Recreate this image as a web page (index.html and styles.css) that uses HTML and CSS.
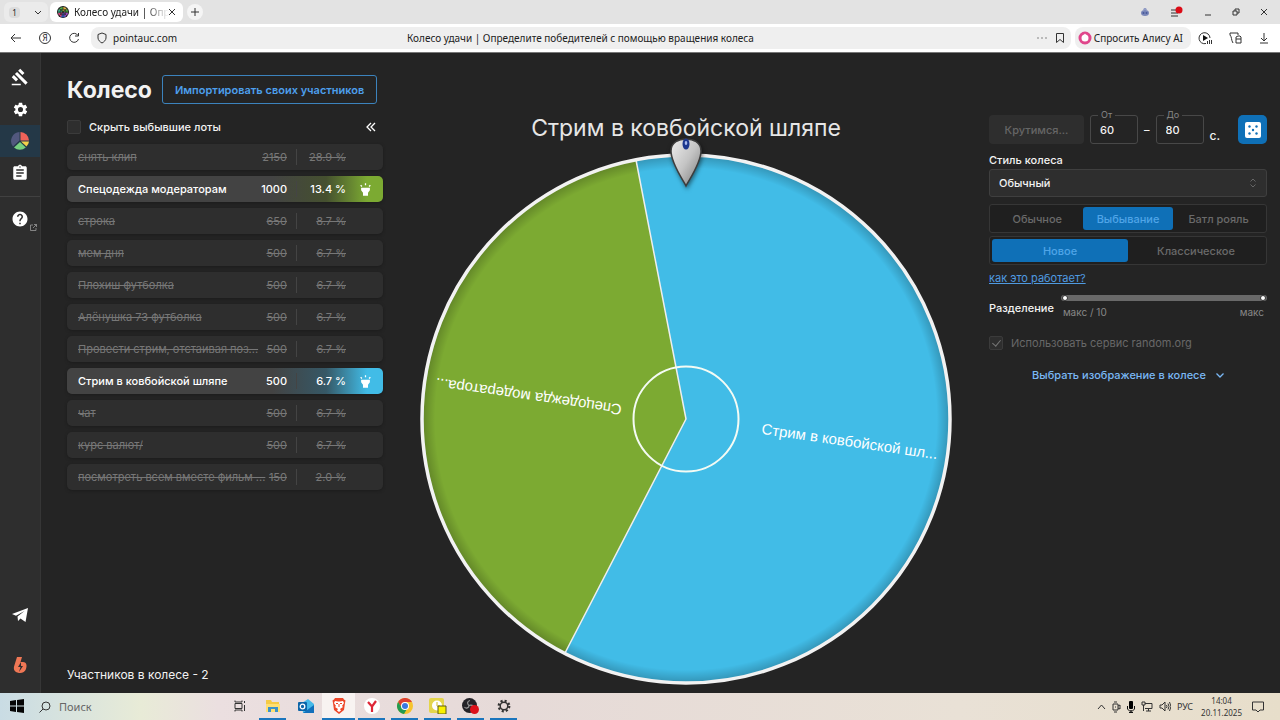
FILE: index.html
```html
<!DOCTYPE html>
<html lang="ru">
<head>
    <meta charset="UTF-8">
    <meta name="viewport" content="width=device-width, initial-scale=1.0">
    <title>Колесо удачи | Определите победителей с помощью вращения колеса</title>
    <link rel="stylesheet" href="styles.css">
</head>
<body>

    <!-- Browser tabs -->
    <div class="tabs">
        <button class="tab-group" aria-label="Группа вкладок"><span class="tab-count">1</span>
            <svg width="8" height="5" viewBox="0 0 8 5" class="line"><path d="M1 1l3 3 3-3"/></svg>
        </button>
        <div class="tab">
            <svg width="12" height="12" viewBox="0 0 12 12">
                <circle cx="6" cy="6" r="6" fill="#252525"/>
                <path d="M6 6V1A5 5 0 0 1 10 3z" fill="#e0b040"/><path d="M6 6l4-3a5 5 0 0 1 1 4z" fill="#4dab3d"/>
                <path d="M6 6l5 1a5 5 0 0 1-3 4z" fill="#9d47c0"/><path d="M6 6l2 5a5 5 0 0 1-4 0z" fill="#3e67dc"/>
                <path d="M6 6l-2 5a5 5 0 0 1-3-4z" fill="#d2417b"/><path d="M6 6L1 7a5 5 0 0 1 1-4z" fill="#3ab08c"/><path d="M6 6L2 3a5 5 0 0 1 4-2z" fill="#4fae48"/>
                <path d="M6 0v12M0 6h12M2 2l8 8M10 2l-8 8" stroke="#222" stroke-width=".6"/><circle cx="6" cy="6" r="3" fill="none" stroke="#222" stroke-width=".6"/>
            </svg>
            <span class="tab-title">Колесо удачи | Опреде</span>
            <button class="plain" aria-label="Закрыть вкладку"><svg width="6" height="6" viewBox="0 0 6 6" class="line"><path d="M0 0l6 6M6 0L0 6"/></svg></button>
        </div>
        <button class="tab-add" aria-label="Новая вкладка"><svg width="8" height="8" viewBox="0 0 8 8" class="line"><path d="M4 0v8M0 4h8"/></svg></button>
        <div class="window-buttons">
            <button class="plain" aria-label="Профиль"><svg width="10" height="10" viewBox="0 0 10 10"><ellipse cx="5" cy="6" rx="4" ry="3" fill="#7986b8"/><path d="M3 3h4l-1-2H4z" fill="#929dc5"/><circle cx="3.500" cy="6" r="1" fill="#485a9b"/><circle cx="6.500" cy="6" r="1" fill="#485a9b"/></svg></button>
            <button class="plain" aria-label="Меню"><svg width="14" height="12" viewBox="0 0 14 12"><path d="M1 4h6M1 7h7M1 10h7" stroke="#333"/><circle cx="9" cy="4" r="3.500" fill="#dc0b16"/></svg></button>
            <button class="plain" aria-label="Свернуть"><svg width="8" height="8" viewBox="0 0 8 8" class="line"><path d="M1 7h6"/></svg></button>
            <button class="plain" aria-label="Развернуть"><svg width="8" height="8" viewBox="0 0 8 8" class="line"><path d="M1 3h4v4H1zM3 3V1h4v4H5"/></svg></button>
            <button class="plain" aria-label="Закрыть"><svg width="8" height="8" viewBox="0 0 8 8" class="line"><path d="M1 1l6 6M7 1L1 7"/></svg></button>
        </div>
    </div>

    <!-- Address bar -->
    <div class="toolbar">
        <button class="plain" aria-label="Назад"><svg width="12" height="12" viewBox="0 0 12 12" class="line"><path d="M11 6H1M5 2L1 6l4 4"/></svg></button>
        <button class="ya" aria-label="Яндекс">Я</button>
        <button class="plain" aria-label="Обновить"><svg width="12" height="12" viewBox="0 0 12 12" class="line"><path d="M10 3.500A4.500 4.500 0 1 0 10.500 7M10.500 1v3H7"/></svg></button>
        <div class="address">
            <div class="host">
                <svg width="10" height="12" viewBox="0 0 10 12" class="line"><path d="M5 1l4 1.500v3.500c0 2-2 4-4 5-2-1-4-3-4-5V2.500z"/></svg>
                <span>pointauc.com</span>
            </div>
            <span class="page-title">Колесо удачи | Определите победителей с помощью вращения колеса</span>
            <div class="address-tools">
                <svg width="12" height="4" viewBox="0 0 12 4" fill="#777"><circle cx="2" cy="2" r=".8"/><circle cx="6" cy="2" r=".8"/><circle cx="10" cy="2" r=".8"/></svg>
                <svg width="8" height="10" viewBox="0 0 8 10" class="line"><path d="M.5.500h7v9L4 6.500l-3.500 3z"/></svg>
            </div>
        </div>
        <button class="alice"><svg width="14" height="14" viewBox="0 0 14 14"><circle cx="7" cy="7" r="5" fill="#fff" stroke="#e0478c" stroke-width="3"/><path d="M7 2.500L10 7H4z" fill="#fff"/></svg>Спросить Алису AI</button>
        <div class="tools">
            <button class="plain" aria-label="Плеер"><svg width="15" height="14" viewBox="0 0 15 14"><path d="M8 12.500A5.500 5.500 0 1 1 12 7" class="line"/><path d="M5 4v6l5-3z" fill="#111"/><path d="M9.500 13v-3M11.500 13V9M13.500 13v-4" stroke="#333"/></svg></button>
            <button class="plain" aria-label="Коллекции"><svg width="14" height="12" viewBox="0 0 14 12" class="line"><path d="M4 11C2 8 3 5 1 3V1h8v2M7 11V5l2-1h2l1 1v6zM7 7h5"/></svg></button>
            <button class="plain" aria-label="Загрузки"><svg width="10" height="12" viewBox="0 0 10 12" class="line"><path d="M5 1v7M2 6l3 3 3-3M1 11h8"/></svg></button>
        </div>
    </div>

    <div class="app">
        <!-- Sidebar -->
        <nav class="sidebar">
            <a href="#" aria-label="Аукцион"><svg width="18" height="18" viewBox="0 0 24 24"><path d="M1 21h12v2H1zM5.245 8.070l2.830-2.827 14.140 14.142-2.828 2.828zM12.317 1l5.657 5.656-2.830 2.830-5.654-5.660zM3.825 9.485l5.657 5.657-2.828 2.828-5.657-5.657z"/></svg></a>
            <a href="#" aria-label="Настройки"><svg width="17" height="17" viewBox="0 0 24 24"><path d="M19.140 12.940c.040-.300.060-.610.060-.940 0-.320-.020-.640-.070-.940l2.030-1.580c.180-.140.230-.410.120-.610l-1.920-3.320c-.120-.220-.370-.290-.590-.220l-2.390.960c-.500-.380-1.030-.700-1.620-.940l-.360-2.540c-.040-.240-.240-.410-.480-.410h-3.840c-.240 0-.430.170-.470.410l-.360 2.540c-.590.240-1.130.570-1.620.940l-2.390-.960c-.220-.080-.470 0-.590.220L2.740 8.870c-.120.210-.080.470.120.610l2.030 1.580c-.050.300-.090.630-.090.940s.020.640.070.940l-2.030 1.580c-.180.140-.230.410-.120.610l1.920 3.320c.120.220.370.290.590.220l2.390-.960c.500.380 1.030.700 1.620.940l.360 2.540c.050.240.240.410.480.410h3.840c.240 0 .440-.170.470-.410l.360-2.540c.590-.240 1.130-.560 1.620-.940l2.390.960c.220.080.470 0 .590-.220l1.920-3.320c.120-.220.070-.470-.120-.610zM12 15.600A3.600 3.600 0 1 1 12 8.400a3.600 3.600 0 0 1 0 7.200z"/></svg></a>
            <a href="#" class="active" aria-label="Колесо"><svg width="18" height="18" viewBox="0 0 18 18"><path d="M8.500 8.500V0A9 9 0 0 0 2 14.500z" fill="#52587e"/><path d="M9.500 8.500V0A9 9 0 0 1 18 8.500z" fill="#ef6259"/><path d="M10 9.500h8a9 9 0 0 1-2.500 5z" fill="#f3cf4b"/><path d="M9 10l5.800 5.500A9 9 0 0 1 3 15.500z" fill="#77d081"/></svg></a>
            <a href="#" aria-label="Статистика"><svg width="18" height="18" viewBox="0 0 24 24"><path d="M19 3h-4.180C14.400 1.840 13.300 1 12 1s-2.400.840-2.820 2H5c-1.100 0-2 .9-2 2v14c0 1.100.9 2 2 2h14c1.100 0 2-.9 2-2V5c0-1.100-.9-2-2-2zm-7 0c.550 0 1 .450 1 1s-.450 1-1 1-1-.450-1-1 .450-1 1-1zm2 14H7v-2h7v2zm3-4H7v-2h10v2zm0-4H7V7h10v2z"/></svg></a>
            <hr>
            <a href="#" class="help" aria-label="Помощь"><svg width="18" height="18" viewBox="0 0 24 24"><path d="M12 2C6.480 2 2 6.480 2 12s4.480 10 10 10 10-4.480 10-10S17.520 2 12 2zm1 17h-2v-2h2v2zm2.070-7.750l-.9.920C13.450 12.900 13 13.500 13 15h-2v-.5c0-1.100.450-2.100 1.170-2.830l1.240-1.260c.370-.360.590-.860.590-1.410 0-1.100-.9-2-2-2s-2 .9-2 2H8c0-2.210 1.790-4 4-4s4 1.790 4 4c0 .880-.360 1.680-.930 2.250z"/></svg>
                <svg class="external" width="7" height="7" viewBox="0 0 7 7"><path d="M3 1H.500v5.500H6V4M4 .500h2.500V3M6.500.500L3 4" fill="none" stroke="#999" stroke-width=".8"/></svg></a>
            <a href="#" class="telegram" aria-label="Телеграм"><svg width="18" height="16" viewBox="0 0 18 16"><path d="M1 7L17 1l-2.500 14-5-3.500L7 14l-.5-4.500L13.500 4 5 8.800z"/></svg></a>
            <a href="#" class="boosty" aria-label="Boosty"><svg width="14" height="18" viewBox="0 0 14 18"><path d="M4 1h5L7.500 6H10c4 0 4 4 3 7-1 3-4 4.500-7 4C1 16 0 13 1.500 9z" fill="#ef7755"/><path d="M8 6l-3 5h2.500l-1.500 5 4-6H8z" fill="#2e2e2e"/></svg></a>
        </nav>

        <main class="content">
            <!-- Lots -->
            <section class="lots">
                <div class="heading">
                    <h1>Колесо</h1>
                    <button class="import">Импортировать своих участников</button>
                </div>
                <div class="lots-tools">
                    <label class="check"><input type="checkbox">Скрыть выбывшие лоты</label>
                    <button class="plain" aria-label="Свернуть список"><svg width="10" height="10" viewBox="0 0 10 10"><path d="M5 1L1 5l4 4M9 1L5 5l4 4" fill="none" stroke="#fff" stroke-width="1.300"/></svg></button>
                </div>
                <ul class="lot-list">
                    <li class="lot out"><span class="name">снять клип</span><span class="cost">2150</span><span class="chance">28.9 %</span></li>
                    <li class="lot green"><span class="name">Спецодежда модераторам</span><span class="cost">1000</span><span class="chance">13.4 %</span>
                        <svg class="lamp" width="15" height="15" viewBox="0 0 24 24"><path d="M5 13l3 4v5h8v-5l3-4V9H5v4zm6-11h2v3h-2V2zM3.500 5.880l1.410-1.410 2.120 2.120L5.620 8zm13.460.710l2.120-2.120 1.410 1.410L18.380 8z"/></svg></li>
                    <li class="lot out"><span class="name">строка</span><span class="cost">650</span><span class="chance">8.7 %</span></li>
                    <li class="lot out"><span class="name">мем дня</span><span class="cost">500</span><span class="chance">6.7 %</span></li>
                    <li class="lot out"><span class="name">Плохиш футболка</span><span class="cost">500</span><span class="chance">6.7 %</span></li>
                    <li class="lot out"><span class="name">Алёнушка 73 футболка</span><span class="cost">500</span><span class="chance">6.7 %</span></li>
                    <li class="lot out"><span class="name">Провести стрим, отстаивая поз...</span><span class="cost">500</span><span class="chance">6.7 %</span></li>
                    <li class="lot blue"><span class="name">Стрим в ковбойской шляпе</span><span class="cost">500</span><span class="chance">6.7 %</span>
                        <svg class="lamp" width="15" height="15" viewBox="0 0 24 24"><path d="M5 13l3 4v5h8v-5l3-4V9H5v4zm6-11h2v3h-2V2zM3.500 5.880l1.410-1.410 2.120 2.120L5.620 8zm13.460.710l2.120-2.120 1.410 1.410L18.380 8z"/></svg></li>
                    <li class="lot out"><span class="name">чат</span><span class="cost">500</span><span class="chance">6.7 %</span></li>
                    <li class="lot out"><span class="name">курс валют/</span><span class="cost">500</span><span class="chance">6.7 %</span></li>
                    <li class="lot out"><span class="name">посмотреть всем вместе фильм ...</span><span class="cost">150</span><span class="chance">2.0 %</span></li>
                </ul>
                <p class="total">Участников в колесе - 2</p>
            </section>

            <!-- Wheel -->
            <section class="wheel">
                <h2>Стрим в ковбойской шляпе</h2>
                <svg viewBox="-266 -266 532 532">
                    <defs>
                        <radialGradient id="rim"><stop offset=".95" stop-color="#000" stop-opacity="0"/><stop offset="1" stop-color="#000" stop-opacity=".22"/></radialGradient>
                        <linearGradient id="pin" x1="0" y1="0" x2="1" y2="1"><stop offset="0" stop-color="#eee"/><stop offset=".5" stop-color="#c4c4c4"/><stop offset="1" stop-color="#777"/></linearGradient>
                    </defs>
                    <circle r="264" fill="#41bce7"/>
                    <path d="M0 0L-121 234A264 264 0 0 1-50-259z" fill="#7caa32"/>
                    <circle r="264" fill="url(#rim)"/>
                    <path d="M-50-259L0 0L-121 234" fill="none" stroke="#eee" stroke-width="1.500"/>
                    <circle r="264" fill="none" stroke="#f2f2f2" stroke-width="3.500"/>
                    <circle r="52.500" fill="none" stroke="#f4fbf4" stroke-width="2"/>
                    <text class="slice" transform="rotate(8.200)" x="254" y="4">Стрим в ковбойской шл...</text>
                    <text class="slice" transform="rotate(188.200)" x="253" y="5">Спецодежда модератора...</text>
                    <g class="pin">
                        <path d="M0-233C-3-239-15-256-15-268C-15-277-7-280 0-280S15-277 15-268C15-256 3-239 0-233z" fill="url(#pin)" stroke="#3c3c3c" stroke-width="1.500"/>
                        <ellipse cy="-275" rx="3.500" ry="5.500" fill="#1c378e"/><ellipse cy="-276" rx="1.300" ry="2" fill="#a7b8ed"/>
                    </g>
                </svg>
            </section>

            <!-- Wheel settings -->
            <form class="settings">
                <div class="spin-row">
                    <button type="button" class="spin" disabled>Крутимся...</button>
                    <div class="field"><label for="from">От</label><input type="text" id="from" value="60"></div>
                    <span class="dash">–</span>
                    <div class="field"><label for="to">До</label><input type="text" id="to" value="80"></div>
                    <span class="sec">с.</span>
                    <button type="button" class="dice" aria-label="Случайное время"><svg width="16" height="16" viewBox="0 0 16 16"><rect width="16" height="16" rx="2" fill="#fff"/><g fill="#0f70b7"><circle cx="4.500" cy="4.500" r="1.200"/><circle cx="11.500" cy="4.500" r="1.200"/><circle cx="8" cy="8" r="1.200"/><circle cx="4.500" cy="11.500" r="1.200"/><circle cx="11.500" cy="11.500" r="1.200"/></g></svg></button>
                </div>
                <label class="title" for="style">Стиль колеса</label>
                <div class="select">
                    <select id="style"><option>Обычный</option></select>
                    <svg width="6" height="10" viewBox="0 0 6 10"><path d="M.5 3.500L3 1l2.500 2.500M.5 6.500L3 9l2.500-2.500" fill="none" stroke="#666"/></svg>
                </div>
                <div class="segments three">
                    <label><input type="radio" name="mode" disabled>Обычное</label>
                    <label><input type="radio" name="mode" disabled checked>Выбывание</label>
                    <label><input type="radio" name="mode" disabled>Батл рояль</label>
                </div>
                <div class="segments">
                    <label><input type="radio" name="kind" disabled checked>Новое</label>
                    <label><input type="radio" name="kind" disabled>Классическое</label>
                </div>
                <a href="#" class="how">как это работает?</a>
                <div class="split">
                    <label for="split">Разделение</label>
                    <div class="slider">
                        <div class="range">
                            <input type="range" id="split" min="0" max="100" value="0">
                            <input type="range" aria-label="Разделение, максимум" min="0" max="100" value="100">
                        </div>
                        <div class="marks"><span>макс / 10</span><span>макс</span></div>
                    </div>
                </div>
                <label class="check random"><input type="checkbox" checked disabled>Использовать сервис random.org</label>
                <button type="button" class="image">Выбрать изображение в колесе
                    <svg width="8" height="5" viewBox="0 0 8 5"><path d="M.5.500L4 4 7.500.500" fill="none" stroke="#7ab8f5" stroke-width="1.300"/></svg>
                </button>
            </form>
        </main>
    </div>

    <!-- Taskbar -->
    <footer class="taskbar">
        <button class="task" aria-label="Пуск"><svg width="14" height="14" viewBox="0 0 14 14"><path d="M0 2l6-1v5.500H0zM7 1l7-1v6.500H7zM0 7.500h6V13l-6-1zM7 7.500h7V14l-7-1z" fill="#050505"/></svg></button>
        <label class="search"><svg width="12" height="12" viewBox="0 0 12 12" class="line"><circle cx="7" cy="5" r="4"/><path d="M4 8l-3.500 3.500"/></svg><input type="text" placeholder="Поиск"></label>
        <button class="task" aria-label="Представление задач"><svg width="12" height="12" viewBox="0 0 12 12" class="line"><path d="M1 3.500h7v5H1zM1 .500v1.500h7V.500M1 11.500V10h7v1.500M10.500 1v2M10.500 5v6"/></svg></button>
        <button class="task open" aria-label="Проводник"><svg width="14" height="14" viewBox="0 0 14 14"><path d="M0 1h5l1 2h7v10H0z" fill="#f5ca45"/><path d="M0 5h14v8H0z" fill="#ffdf72"/><path d="M2 8h10v5h-3v-3H5v3H2z" fill="#3b92ca"/></svg></button>
        <button class="task" aria-label="Outlook"><svg width="16" height="14" viewBox="0 0 16 14"><path d="M4 4l6-4 6 5v9H5z" fill="#46b9e8"/><path d="M5 14l11-8v8z" fill="#1170bb"/><rect y="3" width="9" height="9" rx="1" fill="#0c65a8"/><circle cx="4.500" cy="7.500" r="2.300" fill="none" stroke="#fff" stroke-width="1.300"/></svg></button>
        <button class="task open current" aria-label="Brave"><svg width="14" height="16" viewBox="0 0 14 16"><path d="M3 0h8l1 1.500 1.500 1L13 5l-1 7-5 4-5-4-1-7-.5-2.500 1.500-1z" fill="#ed4629"/><path d="M3 3l3 .500h2L11 3l1 2-2 3 1 1-3 2 1 1.500-2 1.500-2-1.500L6 11 3 9l1-1-2-3z" fill="#fff"/><path d="M4 5.500h2M8 5.500h2M7 6v3" stroke="#ed4629"/></svg></button>
        <button class="task open" aria-label="Яндекс Браузер"><svg width="16" height="16" viewBox="0 0 16 16"><circle cx="8" cy="8" r="8" fill="#fff"/><path d="M4 4l4 4.500V14M12 3L8 8.500" fill="none" stroke="#de2637" stroke-width="2.200"/></svg></button>
        <button class="task open" aria-label="Chrome"><svg width="16" height="16" viewBox="0 0 16 16"><circle cx="8" cy="8" r="8" fill="#f6c32d"/><path d="M1.100 4A8 8 0 0 1 15 4H8L5 10z" fill="#dc3f32"/><path d="M1.100 4A8 8 0 0 0 7 16l3.500-6H5z" fill="#229b52"/><circle cx="8" cy="8" r="4" fill="#fff"/><circle cx="8" cy="8" r="3" fill="#3978e1"/></svg></button>
        <button class="task open" aria-label="Заметки"><svg width="18" height="16" viewBox="0 0 18 16"><rect width="15" height="15" rx="2" fill="#e4d54b"/><circle cx="8" cy="7.500" r="5" fill="#fff"/><path d="M8 4v4h3" stroke="#d0bd28" fill="none"/><path d="M9 8h8v8H9z" fill="#faf100" stroke="#59581c"/></svg></button>
        <button class="task open" aria-label="OBS"><svg width="17" height="16" viewBox="0 0 17 16"><circle cx="7.500" cy="7.500" r="7.500" fill="#252328"/><path d="M7 7.500C5 6 5 3 8 2.500M7 7.500C7 10 4 11 2.500 9M7 7.500c2-1 5 0 5 2" fill="none" stroke="#999" stroke-width="1.200"/><circle cx="12.500" cy="11.500" r="4.500" fill="#dd111a"/></svg></button>
        <button class="task open" aria-label="Параметры"><svg width="14" height="14" viewBox="0 0 14 14"><circle cx="7" cy="7" r="5.300" fill="none" stroke="#333" stroke-width="2.200" stroke-dasharray="2.100 2.060"/><circle cx="7" cy="7" r="3.800" fill="none" stroke="#333" stroke-width="1.500"/></svg></button>
        <div class="tray">
            <svg width="9" height="6" viewBox="0 0 9 6" class="line"><path d="M1 5l3.500-4L8 5"/></svg>
            <svg width="9" height="12" viewBox="0 0 9 12" class="line"><path d="M1 3h5v6H1zM6 5l2-1v4L6 7M2 1h3M2 11h3M3 6h1"/></svg>
            <svg width="8" height="12" viewBox="0 0 8 12"><rect x="2" width="4" height="8" rx="1"/><path d="M.5 5v3l2 2h3l2-2V5M4 9v3M2 11.500h4" fill="none" stroke="#111"/></svg>
            <svg width="12" height="11" viewBox="0 0 12 11" class="line"><path d="M4 2.500h7v5H4M1 1h3v3H1zM2.500 4v6M5 10h5M7.500 8v2"/></svg>
            <svg width="12" height="11" viewBox="0 0 12 11" class="line"><path d="M1 4h2l3-3v9L3 7H1zM7.500 4q1 1.500 0 3M9 2.500q2 3 0 6M10.500 1q3 4.500 0 9"/></svg>
            <span class="lang">РУС</span>
            <time class="clock">14:04<br>20.11.2025</time>
            <svg width="12" height="12" viewBox="0 0 12 12" class="line"><path d="M.5 1h11v8H8l-2 2-2-2H.500z"/></svg>
        </div>
    </footer>

</body>
</html>
```
FILE: styles.css
```css
/* General Styling */
* { margin: 0; padding: 0; box-sizing: border-box; }
body {
    display: flex;
    flex-direction: column;
    min-height: 100vh;
    font-family: Inter, sans-serif;
    font-size: 11px;
    line-height: 16px;
    color: #f2f2f2;
    background: #242424;
}
button, input, select { font: inherit; color: inherit; }
button { border: none; background: none; cursor: pointer; }
svg { display: block; flex: none; }
.line { fill: none; stroke: #333; stroke-width: 1; }
.plain { display: flex; align-items: center; }

/* Browser */
.tabs, .toolbar {
    display: flex;
    align-items: center;
    font-family: "Noto Sans", sans-serif;
    font-size: 10px;
    color: #222;
}
.tabs { height: 24px; padding-left: 4px; background: #e3e3e3; }
.tab-group {
    display: flex;
    align-items: center;
    gap: 14px;
    height: 20px;
    padding: 0 6px 0 5px;
    border-radius: 6px;
    background: #ebebeb;
}
.tab-count { width: 11px; border-radius: 4px; background: #dcdcdc; font-size: 8px; line-height: 11px; }
.tab {
    display: flex;
    align-items: center;
    width: 133px;
    height: 20px;
    margin-left: 2px;
    padding: 0 8px 0 7px;
    border-radius: 6px;
    background: #fff;
}
.tab-title {
    flex: 1;
    min-width: 0;
    margin-left: 5px;
    white-space: nowrap;
    mask-image: linear-gradient(90deg, #000 75%, transparent);
}
.tab-add { padding: 4px; margin-left: 4px; border-radius: 50%; background: #f5f5f5; }
.window-buttons { display: flex; align-items: center; gap: 20px; margin-left: auto; padding-right: 12px; }
.toolbar { height: 29px; padding: 0 11px 0 10px; gap: 17px; background: #fff; border-bottom: 1px solid #777; }
.ya { width: 12px; height: 12px; border: 1px solid #333; border-radius: 50%; font-size: 8px; line-height: 10px; }
.address {
    display: flex;
    flex: 1;
    align-items: center;
    height: 22px;
    margin-left: -6px;
    padding: 0 7px 0 6px;
    border-radius: 8px;
    background: #efefef;
}
.host, .address-tools { display: flex; flex: 1; align-items: center; gap: 6px; }
.address-tools { gap: 8px; justify-content: flex-end; }
.page-title { white-space: nowrap; }
.alice {
    display: flex;
    align-items: center;
    gap: 2px;
    height: 22px;
    margin-left: -13px;
    padding: 0 8px 0 3px;
    border-radius: 8px;
    background: #efefef;
    white-space: nowrap;
}
.tools { display: flex; gap: 16px; margin-left: -10px; }

/* Sidebar */
.app { display: flex; flex: 1; }
.sidebar {
    display: flex;
    flex-direction: column;
    width: 41px;
    padding-top: 8px;
    background: #2e2e2e;
    border-right: 1px solid #363636;
}
.sidebar a {
    position: relative;
    display: flex;
    align-items: center;
    justify-content: center;
    height: 32px;
    fill: #fff;
}
.sidebar .active { background: #243847; }
.sidebar hr { margin: 7px 0 6px; border: none; border-top: 1px solid #414141; }
.external { position: absolute; right: 3px; bottom: 4px; }
.sidebar .telegram { margin-top: auto; }
.sidebar .boosty { margin: 18px 0 12px; }

/* Content */
.content {
    display: grid;
    grid-template-columns: 316px minmax(0, 1fr) 278px;
    gap: 37px;
    flex: 1;
    padding: 0 13px 8px 26px;
}
.lots { display: flex; flex-direction: column; padding-top: 22px; }
.heading { display: flex; align-items: center; gap: 10px; }
h1 { font-size: 23px; line-height: 28px; }
.import {
    height: 29px;
    padding: 0 12px;
    border: 1px solid #3c83bd;
    border-radius: 3px;
    font-weight: 600;
    color: #4d9fec;
    white-space: nowrap;
}
.lots-tools { display: flex; justify-content: space-between; padding: 15px 7px 9px 0; }
.check { display: flex; align-items: center; gap: 8px; font-weight: 500; }
.check input {
    appearance: none;
    width: 14px;
    height: 14px;
    border: 1px solid #3b3b3b;
    border-radius: 2px;
    background: #2e2e2e;
}
.lot-list { display: flex; flex-direction: column; gap: 6px; list-style: none; }
.lot {
    display: grid;
    grid-template-columns: minmax(0, 1fr) 30px 55px 26px;
    align-items: center;
    height: 26px;
    padding: 0 5px 0 11px;
    border-radius: 5px;
    background: #2e2e2e;
    box-shadow: 0 1px 3px #1c1c1c;
    white-space: nowrap;
}
.out { color: #777; text-decoration: line-through; }
.cost { margin-left: -9px; padding-right: 9px; border-right: 1px solid #444; text-align: right; }
.chance { padding-right: 6px; text-align: right; }
.green { background: linear-gradient(90deg, #434343 65%, #45502f 82%, #7caa32 95%); }
.blue { background: linear-gradient(90deg, #434343 65%, #365866 82%, #41bce7 95%); }
.green, .blue { color: #fff; font-weight: 500; }
.lamp { justify-self: center; fill: #fff; }
.total { margin-top: auto; padding-bottom: 2px; font-size: 12px; }

/* Wheel */
.wheel { padding-top: 59px; }
h2 { font-size: 23px; line-height: 32px; font-weight: 400; text-align: center; white-space: nowrap; color: #e6e6e6; }
.wheel svg { width: 100%; margin-top: 9px; overflow: visible; }
.slice { font-family: "Liberation Sans", sans-serif; font-size: 15px; fill: #fff; text-anchor: end; }
.pin { filter: drop-shadow(1px 2px 2px rgba(0, 0, 0, 0.5)); }

/* Settings */
.settings { padding-top: 62px; font-weight: 500; }
.spin-row { display: flex; align-items: center; gap: 6px; }
.spin { width: 95px; height: 29px; border-radius: 4px; background: #2e2e2e; color: #666; }
.field { position: relative; width: 48px; }
.field input {
    width: 100%;
    height: 29px;
    padding-left: 9px;
    border: 1px solid #484848;
    border-radius: 3px;
    background: none;
}
.field label {
    position: absolute;
    top: -7px;
    left: 8px;
    padding: 0 3px;
    background: #242424;
    color: #888;
    font-size: 9px;
    font-weight: 400;
    line-height: 14px;
}
.sec { align-self: flex-end; font-size: 12px; }
.dice { display: flex; align-items: center; justify-content: center; width: 29px; height: 29px; margin-left: auto; border-radius: 5px; background: #0f70b7; }
.title { display: block; padding: 8px 0 1px; }
.select { position: relative; }
.select select {
    appearance: none;
    width: 100%;
    height: 28px;
    padding: 0 9px;
    border: 1px solid #3f3f3f;
    border-radius: 3px;
    background: #2e2e2e;
}
.select svg { position: absolute; right: 11px; top: 9px; }
.segments {
    display: grid;
    grid-template-columns: 1fr 1fr;
    height: 29px;
    margin-top: 3px;
    padding: 2px;
    border: 1px solid #363636;
    border-radius: 3px;
    background: #1f1f1f;
}
.three { grid-template-columns: repeat(3, 1fr); margin-top: 7px; }
.segments label {
    display: flex;
    align-items: center;
    justify-content: center;
    border-radius: 3px;
    color: #6a6a6a;
}
.segments label:has(:checked) { background: #0f70b7; color: #4fa5e8; }
.segments input { position: absolute; appearance: none; }
.how { display: block; width: max-content; margin-top: 5px; color: #4f9ae0; font-weight: 400; }
.split { display: flex; align-items: center; gap: 7px; margin-top: 9px; }
.slider { flex: 1; }
.range { position: relative; height: 6px; border-radius: 3px; background: #696969; }
.range input {
    position: absolute;
    left: 0;
    top: 0;
    width: 100%;
    height: 6px;
    padding: 0 1px;
    appearance: none;
    background: none;
    pointer-events: none;
}
.range input::-webkit-slider-thumb {
    appearance: none;
    width: 6px;
    height: 6px;
    border: 1px solid #333;
    border-radius: 50%;
    background: #fff;
    pointer-events: auto;
}
.marks { display: flex; justify-content: space-between; padding: 3px 3px 0 2px; color: #888; font-size: 10px; font-weight: 400; }
.random { margin-top: 15px; color: #686868; font-weight: 400; }
.check input:checked { position: relative; }
.check input:checked::after {
    content: "";
    position: absolute;
    left: 4px;
    top: 1px;
    width: 4px;
    height: 7px;
    border: solid #777;
    border-width: 0 1px 1px 0;
    transform: rotate(40deg);
}
.image { display: flex; align-items: center; gap: 10px; margin: 16px auto 0; color: #7ab8f5; }

/* Taskbar */
.taskbar {
    display: flex;
    height: 27px;
    background: linear-gradient(90deg, #c9dce4, #e8ebd7 11%, #ebdfe0 17%, #e6dad8 40%, #e9e1d6 75%, #e7deca);
    font-family: "Noto Sans", sans-serif;
    color: #333;
}
.task { display: flex; align-items: center; justify-content: center; width: 33px; border: solid transparent; border-width: 0 0 2px; }
.open {
    background: linear-gradient(#1b76bd, #1b76bd) no-repeat center bottom / 27px 2px;
    background-origin: border-box;
    background-clip: border-box;
}
.current { background-color: #f8f3f1; background-size: 100% 2px; }
.search { display: flex; align-items: center; gap: 8px; width: 190px; padding-left: 6px; }
.search input { flex: 1; min-width: 0; border: none; background: none; }
.search input::placeholder { color: #666; }
.tray { display: flex; align-items: center; gap: 6px; margin-left: auto; padding-right: 16px; }
.lang { font-size: 9px; }
.clock { padding: 0 4px 0 2px; text-align: center; font-size: 8px; line-height: 12px; }
```
